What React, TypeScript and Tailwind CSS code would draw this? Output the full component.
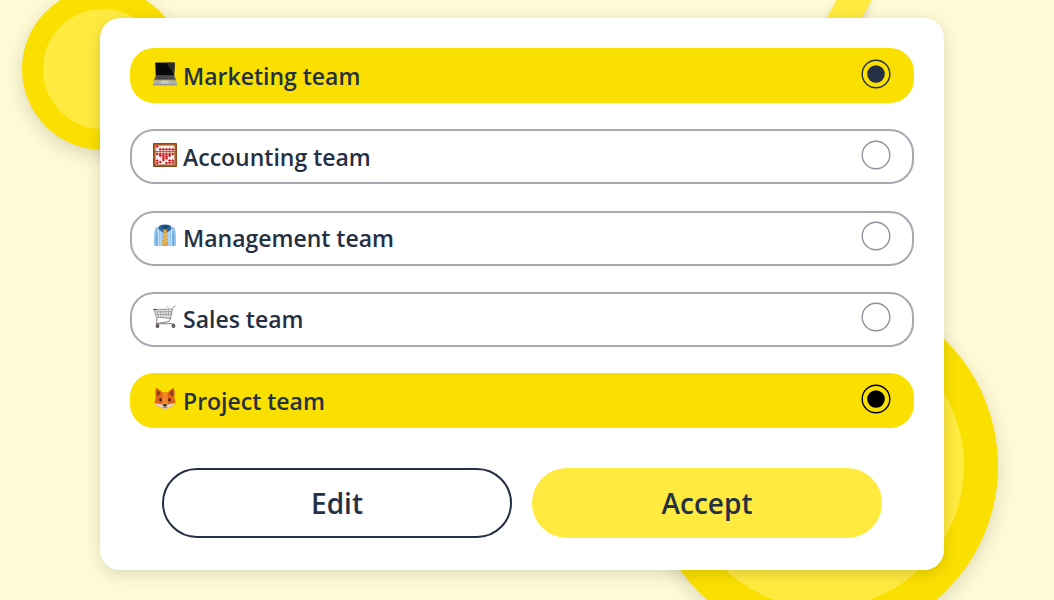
import React from 'react';
import clsx from 'clsx';

interface Team {
  id: string;
  label: string;
  icon: () => React.ReactElement;
  dot: string;
}

function LaptopIcon() {
  return (
    <svg viewBox="0 0 24 24" className="size-6 shrink-0" aria-hidden="true">
      <path d="M2 .5h20l-.5 13.5h-19z" fill="#6f6a3c" />
      <path d="M2.500 .8h19l-.6 12.900H3.100z" fill="#080808" />
      <path d="M13 .8h8.500l-.6 12z" fill="#2b2b2b" />
      <path d="M2.500 13.500h19l1.800 5H.7z" fill="#6b696c" />
      <path d="M3.800 14.300h16.400l.9 2.700H2.900z" fill="#3e3c3c" />
      <path d="M3.500 15.700h17" stroke="#858585" strokeWidth=".5" strokeDasharray="1 .6" />
      <path d="M.7 18.500h22.600l.7 4.500H0z" fill="#adb0b5" />
      <path d="M8.500 18.700h7l.5 3H8z" fill="#c8cacd" />
      <path d="M0 22.300h24v1H0z" fill="#85868a" />
    </svg>
  );
}

const rods = [4.2, 7.3, 10.4, 13.5, 16.6, 19.8];

// Bead heights on each rod, left to right
const beads = [
  [3.6, 11, 17.5, 20],
  [6.4, 11, 12.8, 19],
  [6.4, 11, 13, 15, 17],
  [6.4, 11, 13.4, 15.4, 20],
  [6.4, 11, 12.8, 17.5, 19.8],
  [6.4, 11, 17.5, 19.8],
];

function AbacusIcon() {
  return (
    <svg viewBox="0 0 24 24" className="size-6 shrink-0" aria-hidden="true">
      <rect width="24" height="24" rx="1" fill="#a35c26" />
      <rect x="2.600" y="2.600" width="18.800" height="18.800" fill="#fff" />
      {rods.map((x) => (
        <path key={x} d={`M${x} 2.600v18.800`} stroke="#c99a90" strokeWidth=".5" />
      ))}
      {beads.map((column, i) =>
        column.map((y) => <ellipse key={`${i}-${y}`} cx={rods[i]} cy={y} rx="1.450" ry="1.050" fill="#d0101a" />)
      )}
      <path d="M2 8.700h20" stroke="#b66a2c" strokeWidth="1.400" />
      <rect x=".4" y=".4" width="23.200" height="23.200" rx="1" fill="none" stroke="#7a3f17" strokeWidth=".7" />
    </svg>
  );
}

function ShirtIcon() {
  return (
    <svg viewBox="0 0 24 24" className="size-6 shrink-0" aria-hidden="true">
      <path d="M7 2 3 3.500C1.500 5 1 9 1 20.500Q1 22 2.500 22h19q1.500 0 1.500-1.500C23 9 22.500 5 21 3.500L17 2z" fill="#8fc2ef" />
      <path d="M5.500 5v17M8 7v15M16 7v15M18.500 5v17" stroke="#c9e5fb" strokeWidth="1" />
      <path d="M3.800 9v13M20.200 9v13" stroke="#4b87bd" strokeWidth=".7" />
      <path d="M6.500 1.500Q12-.5 17.500 1.500L18.500 5l-4 3.500L12 6 9.500 8.500 5.500 5z" fill="#2e6798" />
      <path d="M8 2.200q4-1.400 8 0L12 5.500z" fill="#17476f" />
      <path d="M10.500 5.500h3l.7 2-1 2 2 10.500-3.200 2.200L8.800 20l2-10.500-1-2z" fill="#dfa034" />
      <path d="m10.600 12 3-2M9.800 16l4.400-3M9.300 19.500l5.400-3.700" stroke="#f8dfa0" strokeWidth=".9" />
    </svg>
  );
}

function CartIcon() {
  return (
    <svg viewBox="0 0 24 24" className="size-6 shrink-0" fill="none" aria-hidden="true">
      <path d="M1 4.500 19 4l-1.500 9.500L3 12z" fill="#eeeeee" />
      <path d="M1 4.500 19 4M1.500 7l17-.3M2 9.500l16-.2M3 12l14.500 1.500" stroke="#777" strokeWidth=".7" />
      <path d="m1 4.500 2 7.500M4 4.500l1.500 8M7 4.400l1 8.200M10 4.300l.5 8.500M13 4.200v8.900M16 4.100l-1 9.100" stroke="#8a8a8a" strokeWidth=".6" />
      <path d="m22.500.8-3 2.700-2 10-1.500 3-13 2.200h17.500v1.500M4 12.500l-.5 6" stroke="#777" strokeWidth=".9" />
      <path d="m14 1 2 2.500" stroke="#aaa" strokeWidth=".6" />
      <path d="M.5 4.500h3" stroke="#28447b" strokeWidth="1.200" />
      <circle cx="4.500" cy="21" r="1.900" fill="#574949" />
      <circle cx="20.500" cy="21" r="1.900" fill="#574949" />
      <circle cx="4.500" cy="21" r=".6" fill="#bb9999" />
      <circle cx="20.500" cy="21" r=".6" fill="#bb9999" />
    </svg>
  );
}

function FoxIcon() {
  return (
    <svg viewBox="0 0 24 24" className="size-6 shrink-0" aria-hidden="true">
      <path d="M3 1c2 .3 4.800 2.500 6.200 4.500h5.600C16.200 3.500 19 1.300 21 1c1 3 .8 7 .2 9.500l1.500 5.500-3.500 3.200L12 22.500l-7.200-3.300L1.300 16l1.500-5.500C2.200 8 2 4 3 1z" fill="#dd6417" />
      <path d="M3.800 3c1.500.7 3 2 3.700 3.500L4 9.500zM20.200 3c-1.500.7-3 2-3.700 3.500l3.500 3z" fill="#8a3f1c" />
      <path d="M9 5.500h6l-.5 6 .5 5.500H9l.5-5.500z" fill="#f0842a" />
      <path d="m1.300 16 4.200.8 4.500 1L12 16.500l2 1.300 4.500-1 4.200-.8-3.500 3.200L12 22.500l-7.200-3.300z" fill="#e6d3c0" />
      <ellipse cx="7.500" cy="12.800" rx="1.200" ry="1.600" fill="#281a16" />
      <ellipse cx="16.500" cy="12.800" rx="1.200" ry="1.600" fill="#281a16" />
      <ellipse cx="12" cy="18.200" rx="1.700" ry="1.300" fill="#211d20" />
      <path d="M9.500 20.200q2.500 1.300 5 0" stroke="#6d5548" strokeWidth=".7" fill="none" />
    </svg>
  );
}

const teams: Team[] = [
  { id: 'marketing', label: 'Marketing team', icon: LaptopIcon, dot: '#253044' },
  { id: 'accounting', label: 'Accounting team', icon: AbacusIcon, dot: '#253044' },
  { id: 'management', label: 'Management team', icon: ShirtIcon, dot: '#253044' },
  { id: 'sales', label: 'Sales team', icon: CartIcon, dot: '#253044' },
  { id: 'project', label: 'Project team', icon: FoxIcon, dot: '#000000' },
];

interface TeamRowProps {
  team: Team;
  checked: boolean;
  onToggle: () => void;
}

function TeamRow({ team, checked, onToggle }: TeamRowProps) {
  return (
    <label
      htmlFor={team.id}
      className={clsx(
        'flex h-[55px] cursor-pointer items-center gap-1.5 rounded-3xl border-2 px-[21px] pb-1',
        checked ? 'border-[#fae000] bg-[#fae000]' : 'border-[#a5aab2] bg-white'
      )}
    >
      <team.icon />
      <span className="flex-1 pt-1 text-[23px] leading-8 font-semibold">{team.label}</span>
      <span className="grid size-[30px] shrink-0 place-items-center">
        <input
          id={team.id}
          type="checkbox"
          checked={checked}
          onChange={onToggle}
          className="col-start-1 row-start-1 size-[30px] cursor-pointer appearance-none rounded-full"
        />
        <svg viewBox="0 0 30 30" className="pointer-events-none col-start-1 row-start-1 size-[30px]" aria-hidden="true">
          <circle cx="15" cy="15" r="13.800" fill="none" stroke={checked ? team.dot : '#8d939d'} strokeWidth="1.400" />
          {checked && <circle cx="15" cy="15" r="8.800" fill={team.dot} />}
        </svg>
      </span>
    </label>
  );
}

export default function App() {
  const [selected, setSelected] = React.useState<string[]>(['marketing', 'project']);

  const toggle = (id: string) => {
    setSelected((prev) => (prev.includes(id) ? prev.filter((s) => s !== id) : [...prev, id]));
  };

  return (
    <div className="relative isolate min-h-screen overflow-hidden bg-[#fffad5] pt-[18px] pr-[110px] pb-[30px] pl-[100px] font-['Open_Sans',sans-serif] text-[#253044]">
      {/* Background shapes */}
      <div className="absolute -top-3 left-[22px] -z-10 size-[162px] rounded-full border-[21px] border-[#fae000] bg-[#ffeb3f] shadow-[0_6px_18px_rgba(0,0,0,0.14)]" />
      <div className="absolute top-[290px] right-14 -z-10 size-[352px] rounded-full border-[34px] border-[#fae000] bg-[#ffeb3f] shadow-[0_6px_18px_rgba(0,0,0,0.14)]" />
      <svg viewBox="0 0 80 40" className="absolute top-0 right-[174px] -z-10 h-10 w-20 drop-shadow-lg" aria-hidden="true">
        <path d="M36.500 0h35L50 40H15z" fill="#ffeb3f" />
      </svg>

      <main className="rounded-[20px] bg-white px-[30px] pt-[30px] pb-8 shadow-[0_4px_16px_rgba(0,0,0,0.14)]">
        <div className="flex min-h-[380px] flex-col justify-between">
          {teams.map((team) => (
            <TeamRow
              key={team.id}
              team={team}
              checked={selected.includes(team.id)}
              onToggle={() => toggle(team.id)}
            />
          ))}
        </div>

        <div className="mt-10 flex gap-5 px-8">
          <button type="button" className="h-[70px] flex-1 rounded-full border-2 border-[#253044] bg-white text-[28px] font-semibold">
            Edit
          </button>
          <button type="button" className="h-[70px] flex-1 rounded-full border-2 border-[#ffeb3f] bg-[#ffeb3f] text-[28px] font-semibold">
            Accept
          </button>
        </div>
      </main>
    </div>
  );
}
